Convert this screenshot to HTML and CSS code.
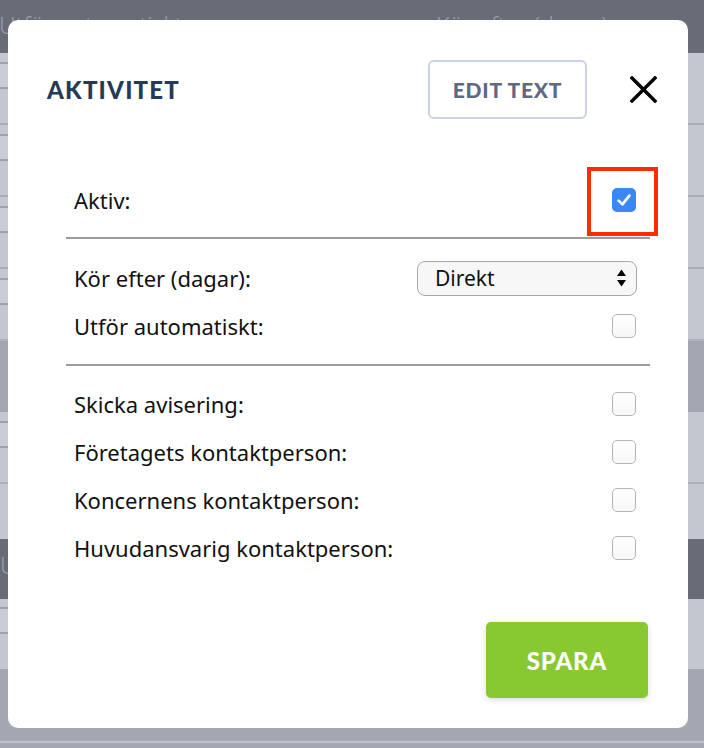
FILE: index.html
```html
<!DOCTYPE html>
<html lang="sv">
<head>
<meta charset="utf-8">
<title>Aktivitet</title>
<link rel="stylesheet" href="styles.css">
</head>
<body>
<div class="bg">
  <div class="bg-head"><span class="bg-h1">Utför automatiskt</span><span class="bg-h2">Kör efter (dagar)</span></div>
  <div class="bg-row"><span class="bg-ctl"></span></div>
  <div class="bg-row"><span class="bg-ctl"></span></div>
  <div class="bg-row"><span class="bg-ctl bg-sel"></span></div>
  <div class="bg-row"><span class="bg-ctl"></span></div>
  <div class="bg-band"></div>
  <div class="bg-row"><span class="bg-ctl bg-sel"></span></div>
  <div class="bg-row bg-short"></div>
  <div class="bg-dark"><span class="bg-u">U</span></div>
  <div class="bg-row bg-last"><span class="bg-ctl"></span></div>
  <div class="bg-band bg-band2"></div>
  <div class="bg-foot"></div>
</div>

<div class="modal">
  <div class="modal-head">
    <h1 class="title">AKTIVITET</h1>
    <button class="btn-edit">EDIT TEXT</button>
    <svg class="close" width="27" height="27" viewBox="0 0 27 27"><path d="M2 2 L25 25 M25 2 L2 25" stroke="#000" stroke-width="3.4" stroke-linecap="square" fill="none"/></svg>
  </div>
  <div class="modal-body">
    <div class="row row-first">
      <span class="label">Aktiv:</span>
      <span class="cb-wrap"><span class="cb cb-on"><svg width="24" height="24" viewBox="0 0 24 24"><path d="M6.6 12.6 L10.4 16.4 L17.4 7.6" stroke="#fff" stroke-width="2.7" stroke-linecap="round" stroke-linejoin="round" fill="none"/></svg></span></span>
    </div>
    <div class="divider div1"></div>
    <div class="row row-sel">
      <span class="label">Kör efter (dagar):</span>
      <div class="select"><span>Direkt</span><svg width="11" height="20" viewBox="0 0 11 20"><path d="M5.5 1.5 L10 8 L1 8 Z M1 12 L10 12 L5.5 18.5 Z" fill="#000"/></svg></div>
    </div>
    <div class="row">
      <span class="label">Utför automatiskt:</span>
      <span class="cb"></span>
    </div>
    <div class="divider div2"></div>
    <div class="row row-after">
      <span class="label">Skicka avisering:</span>
      <span class="cb"></span>
    </div>
    <div class="row">
      <span class="label">Företagets kontaktperson:</span>
      <span class="cb"></span>
    </div>
    <div class="row">
      <span class="label">Koncernens kontaktperson:</span>
      <span class="cb"></span>
    </div>
    <div class="row">
      <span class="label">Huvudansvarig kontaktperson:</span>
      <span class="cb"></span>
    </div>
    <div class="actions">
      <button class="btn-save">SPARA</button>
    </div>
  </div>
</div>
</body>
</html>
```

FILE: styles.css
```css
*, *::before, *::after { box-sizing: border-box; }

html, body {
  margin: 0;
  padding: 0;
}

body {
  width: 704px;
  height: 748px;
  overflow: hidden;
  position: relative;
  font-family: "Noto Sans", "Open Sans", sans-serif;
  background: #c4c7d0;
}

/* ---------- dimmed background table ---------- */
.bg {
  display: flex;
  flex-direction: column;
  height: 748px;
}

.bg-head {
  height: 53px;
  background: #686c77;
  color: #9a9ea8;
  font-size: 23px;
  font-weight: 300;
  display: flex;
  align-items: flex-start;
  padding-top: 9px;
  flex: none;
  white-space: nowrap;
}

.bg-h1 { margin-left: -1px; width: 437px; flex: none; }
.bg-h2 { flex: none; }

.bg-row {
  height: 72px;
  flex: none;
  background: #c4c7d0;
  border-bottom: 2px solid #adb0b9;
  padding-top: 9px;
}

.bg-short { height: 55px; border-bottom: none; }
.bg-last { height: 70px; padding-top: 8px; border-bottom: none; }

.bg-ctl {
  display: block;
  width: 40px;
  height: 27px;
  margin-left: -6px;
  border: 2px solid #9ea1aa;
  border-radius: 3px;
  background: #c9ccd4;
}

.bg-band {
  height: 71px;
  flex: none;
  background: #a4a7b1;
}

.bg-band2 { height: 72px; }

.bg-dark {
  height: 60px;
  flex: none;
  background: #686c77;
  color: #9a9ea8;
  font-size: 23px;
  font-weight: 300;
  padding-top: 10px;
}

.bg-u { margin-left: 0; }

.bg-foot {
  flex: 1;
  background: #a4a7b1;
  border-top: 2px solid #bfc2cb;
}

/* ---------- modal ---------- */
.modal {
  position: absolute;
  left: 8px;
  top: 20px;
  width: 680px;
  height: 708px;
  background: #fff;
  border-radius: 10px;
}

.modal-head {
  display: flex;
  align-items: center;
  padding: 40px 31px 0 39px;
}

.title {
  flex: 1;
  margin: 0;
  font-family: Lato, "Noto Sans", sans-serif;
  font-weight: 900;
  font-size: 24px;
  letter-spacing: 1.2px;
  color: #243b55;
}

.btn-edit {
  width: 159px;
  height: 59px;
  background: #fff;
  border: 2px solid #c9d4e0;
  border-radius: 6px;
  font-family: Lato, "Noto Sans", sans-serif;
  font-weight: 900;
  font-size: 21px;
  letter-spacing: 0.8px;
  color: #5d6a82;
  padding: 0;
  margin-right: 43px;
}

.close { display: block; flex: none; }

.modal-body {
  display: flex;
  flex-direction: column;
  padding: 0 38px 0 58px;
}

.row {
  height: 48px;
  display: flex;
  align-items: center;
  justify-content: space-between;
  padding: 0 14px 0 8px;
}

.row-first { margin-top: 57px; }
.row-sel { margin-top: 15px; padding-right: 13px; }
.row-after { margin-top: 14px; }

.label {
  font-size: 22px;
  color: #111;
}

.divider {
  height: 2px;
  background: #9c9c9c;
}

.div1 { margin-top: 13px; }
.div2 { margin-top: 14px; }

.cb {
  width: 24px;
  height: 24px;
  border: 1px solid #b5b5b5;
  border-radius: 5px;
  background: linear-gradient(#fff, #f7f7f7);
  display: block;
}

.cb-on {
  border: none;
  background: #3b87f6;
}

.cb-on svg { display: block; }

.cb-wrap {
  position: relative;
  display: block;
}

.cb-wrap::after {
  content: "";
  position: absolute;
  left: -25px;
  top: -21px;
  width: 71px;
  height: 69px;
  border: 4px solid #ff2c00;
}

.select {
  width: 220px;
  height: 35px;
  border: 1.5px solid #a8a8a8;
  border-radius: 8px;
  background: #f7f7f7;
  display: flex;
  align-items: center;
  justify-content: space-between;
  padding: 0 9px 0 17px;
  font-size: 21px;
  color: #111;
}

.select svg { display: block; }

.actions {
  display: flex;
  justify-content: flex-end;
  margin-top: 50px;
}

.btn-save {
  width: 162px;
  height: 76px;
  margin-right: 2px;
  border: none;
  border-radius: 5px;
  background: #88c932;
  box-shadow: 0 2px 6px rgba(0, 0, 0, 0.14);
  color: #fff;
  font-family: Lato, "Noto Sans", sans-serif;
  font-weight: 900;
  font-size: 24px;
  letter-spacing: 0.8px;
  padding: 0;
}
```
